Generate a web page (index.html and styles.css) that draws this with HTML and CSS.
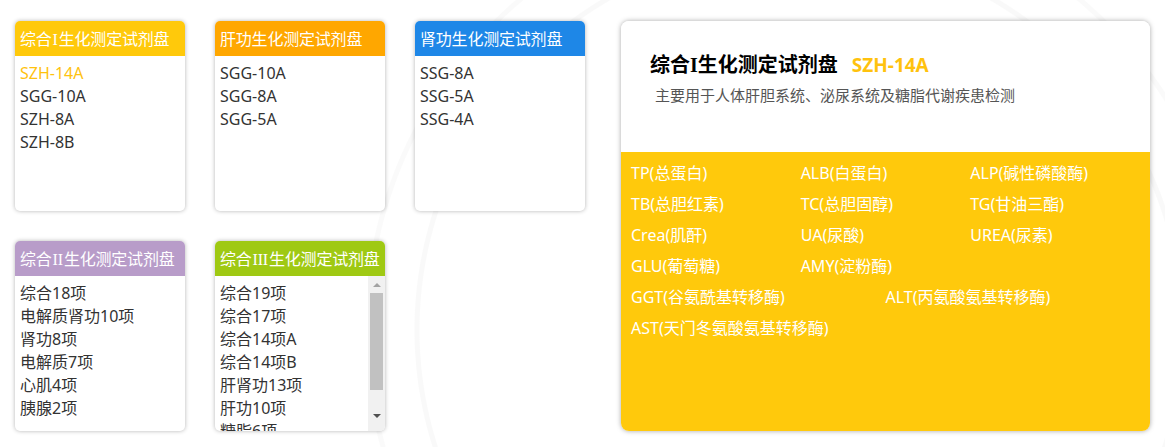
FILE: index.html
```html
<!DOCTYPE html>
<html lang="zh-CN">
<head>
    <meta charset="UTF-8">
    <meta name="viewport" content="width=device-width, initial-scale=1.0">
    <title>生化测定试剂盘</title>
    <link rel="stylesheet" href="styles.css">
</head>
<body>
    <div class="page">
        <div class="kits">
            <div class="kit">
                <div class="kit-head yellow">综合<span class="num">I</span>生化测定试剂盘</div>
                <div class="kit-body">
                    <ul class="kit-list">
                        <li class="active">SZH-14A</li>
                        <li>SGG-10A</li>
                        <li>SZH-8A</li>
                        <li>SZH-8B</li>
                    </ul>
                </div>
            </div>
            <div class="kit">
                <div class="kit-head orange">肝功生化测定试剂盘</div>
                <div class="kit-body">
                    <ul class="kit-list">
                        <li>SGG-10A</li>
                        <li>SGG-8A</li>
                        <li>SGG-5A</li>
                    </ul>
                </div>
            </div>
            <div class="kit">
                <div class="kit-head blue">肾功生化测定试剂盘</div>
                <div class="kit-body">
                    <ul class="kit-list">
                        <li>SSG-8A</li>
                        <li>SSG-5A</li>
                        <li>SSG-4A</li>
                    </ul>
                </div>
            </div>
            <div class="kit">
                <div class="kit-head purple">综合<span class="num">II</span>生化测定试剂盘</div>
                <div class="kit-body">
                    <ul class="kit-list">
                        <li>综合18项</li>
                        <li>电解质肾功10项</li>
                        <li>肾功8项</li>
                        <li>电解质7项</li>
                        <li>心肌4项</li>
                        <li>胰腺2项</li>
                    </ul>
                </div>
            </div>
            <div class="kit">
                <div class="kit-head green">综合<span class="num">III</span>生化测定试剂盘</div>
                <div class="kit-body">
                    <ul class="kit-list">
                        <li>综合19项</li>
                        <li>综合17项</li>
                        <li>综合14项A</li>
                        <li>综合14项B</li>
                        <li>肝肾功13项</li>
                        <li>肝功10项</li>
                        <li>糖脂6项</li>
                        <li>血脂4项</li>
                        <li>肾功3项</li>
                    </ul>
                    <div class="scrollbar">
                        <span class="arrow up"></span>
                        <span class="thumb"></span>
                        <span class="arrow down"></span>
                    </div>
                </div>
            </div>
        </div>

        <div class="detail">
            <div class="detail-top">
                <h2>综合<span class="num">I</span>生化测定试剂盘<span class="code">SZH-14A</span></h2>
                <p>主要用于人体肝胆系统、泌尿系统及糖脂代谢疾患检测</p>
            </div>
            <ul class="items">
                <li>TP(总蛋白)</li>
                <li>ALB(白蛋白)</li>
                <li>ALP(碱性磷酸酶)</li>
                <li>TB(总胆红素)</li>
                <li>TC(总胆固醇)</li>
                <li>TG(甘油三酯)</li>
                <li>Crea(肌酐)</li>
                <li>UA(尿酸)</li>
                <li>UREA(尿素)</li>
                <li>GLU(葡萄糖)</li>
                <li>AMY(淀粉酶)</li>
                <li class="wide">GGT(谷氨酰基转移酶)</li>
                <li class="wide">ALT(丙氨酸氨基转移酶)</li>
                <li class="wide">AST(天门冬氨酸氨基转移酶)</li>
            </ul>
        </div>
    </div>
</body>
</html>
```

FILE: styles.css
```css
body {
    margin: 0;
    font-family: "Noto Sans", "Noto Sans CJK SC", sans-serif;
    background-color: #fff;
    background-image:
        radial-gradient(circle at 800px 330px, transparent 380px, #f9f9f9 381px, #f9f9f9 385px, transparent 386px),
        radial-gradient(circle at 800px 330px, transparent 430px, #fafafa 431px, #fafafa 435px, transparent 436px);
    height: 447px;
    overflow: hidden;
}
.page {
    display: flex;
    padding: 21px 0 0 15px;
}
.num {
    font-family: "Liberation Serif", serif;
    margin: 0 1px;
}
.kits {
    display: grid;
    grid-template-columns: repeat(3, 170px);
    grid-auto-rows: 190px;
    gap: 30px;
    width: 570px;
    align-content: start;
}
.kit {
    background-color: #fff;
    border-radius: 5px;
    box-shadow: 0 0 4px rgba(0, 0, 0, 0.3);
    overflow: hidden;
    display: flex;
    flex-direction: column;
}
.kit-head {
    height: 35px;
    line-height: 37px;
    padding-left: 5px;
    color: #fff;
    font-size: 16px;
    white-space: nowrap;
    letter-spacing: -0.2px;
}
.yellow { background-color: #ffc90b; }
.orange { background-color: #ffa700; }
.blue { background-color: #1e87e7; }
.purple { background-color: #b89cc9; }
.green { background-color: #9fc913; }
.kit-body {
    flex: 1;
    display: flex;
    overflow: hidden;
}
.kit-list {
    list-style: none;
    margin: 0;
    padding: 6px 5px 0;
    font-size: 16px;
    color: #333;
    flex: 1;
    overflow: hidden;
}
.kit-list li {
    height: 23px;
    line-height: 23px;
    white-space: nowrap;
}
.kit-list li.active {
    color: #ffc20e;
}
.scrollbar {
    width: 17px;
    background-color: #f1f1f1;
    display: flex;
    flex-direction: column;
    align-items: center;
}
.arrow {
    height: 17px;
    width: 17px;
    display: flex;
    align-items: center;
    justify-content: center;
}
.arrow::before {
    content: "";
    border-left: 4px solid transparent;
    border-right: 4px solid transparent;
}
.arrow.up::before {
    border-bottom: 4px solid #a3a3a3;
}
.arrow.down {
    margin-top: auto;
    height: 19px;
    align-items: flex-start;
    padding-top: 2px;
    box-sizing: border-box;
}
.arrow.down::before {
    border-top: 4px solid #505050;
}
.thumb {
    width: 13px;
    height: 97px;
    background-color: #c1c1c1;
}
.detail {
    margin-left: 36px;
    width: 529px;
    height: 410px;
    border-radius: 8px;
    box-shadow: 0 0 5px rgba(0, 0, 0, 0.35);
    overflow: hidden;
    display: flex;
    flex-direction: column;
}
.detail-top {
    background-color: #fff;
    height: 131px;
    padding: 30px 0 0 29px;
    box-sizing: border-box;
}
.detail-top h2 {
    margin: 0;
    font-size: 20px;
    line-height: 28px;
    font-weight: bold;
    color: #000;
    white-space: nowrap;
}
.detail-top .num {
    margin: 0;
}
.detail-top .code {
    margin-left: 14px;
    font-family: "Noto Sans", sans-serif;
    font-size: 19px;
    color: #ffc20e;
}
.detail-top p {
    margin: 6px 0 0 5px;
    font-size: 15px;
    line-height: 20px;
    color: #555;
}
.items {
    list-style: none;
    margin: 0;
    padding: 6px 10px 0;
    flex: 1;
    background-color: #ffc90c;
    display: flex;
    flex-wrap: wrap;
    align-content: start;
}
.items li {
    width: 33.33%;
    height: 31px;
    line-height: 31px;
    color: #fff;
    font-size: 16px;
    white-space: nowrap;
}
.items li.wide {
    width: 50%;
}
```
